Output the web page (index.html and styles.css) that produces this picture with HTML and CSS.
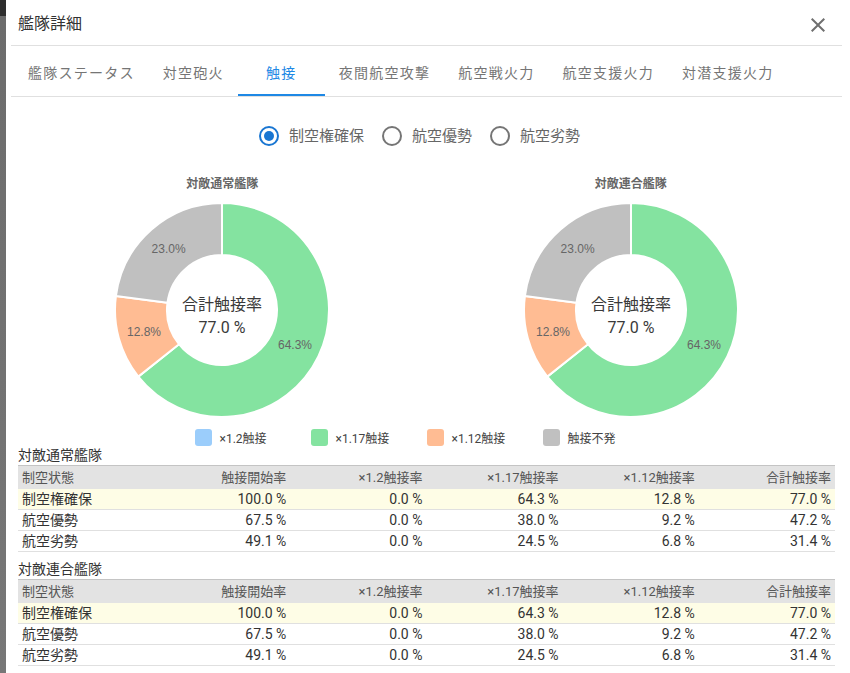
FILE: index.html
```html
<!DOCTYPE html>
<html lang="ja">
<head>
<meta charset="utf-8">
<title>艦隊詳細</title>
<link rel="stylesheet" href="styles.css">
</head>
<body>
<div class="backdrop"></div>
<div class="dialog">
  <header class="dlg-head">
    <div class="dlg-title">艦隊詳細</div>
    <button class="close-btn" aria-label="close">
      <svg viewBox="0 0 24 24" width="24" height="24"><path d="M19 6.41L17.59 5 12 10.59 6.41 5 5 6.41 10.59 12 5 17.59 6.41 19 12 13.41 17.59 19 19 17.59 13.41 12z" fill="#6f6f6f"/></svg>
    </button>
  </header>
  <nav class="tabs">
    <div class="tab">艦隊ステータス</div>
    <div class="tab">対空砲火</div>
    <div class="tab active">触接</div>
    <div class="tab">夜間航空攻撃</div>
    <div class="tab">航空戦火力</div>
    <div class="tab">航空支援火力</div>
    <div class="tab">対潜支援火力</div>
  </nav>
  <main class="content">
    <div class="radios">
      <label class="radio on"><span class="radio-ico"><svg viewBox="0 0 24 24" width="24" height="24"><circle cx="12" cy="12" r="9" fill="none" stroke="#1976d2" stroke-width="2"/><circle cx="12" cy="12" r="5" fill="#1976d2"/></svg></span><span class="radio-label">制空権確保</span></label>
      <label class="radio"><span class="radio-ico"><svg viewBox="0 0 24 24" width="24" height="24"><circle cx="12" cy="12" r="9" fill="none" stroke="#757575" stroke-width="2"/></svg></span><span class="radio-label">航空優勢</span></label>
      <label class="radio"><span class="radio-ico"><svg viewBox="0 0 24 24" width="24" height="24"><circle cx="12" cy="12" r="9" fill="none" stroke="#757575" stroke-width="2"/></svg></span><span class="radio-label">航空劣勢</span></label>
    </div>

    <div class="charts">
      <section class="chart">
        <div class="chart-title">対敵通常艦隊</div>
        <svg class="donut" viewBox="0 0 216 216" width="216" height="216">
          <path class="seg green" d="M108,1 A107,107 0 1,1 24.28,174.64 L64.97,142.25 A55,55 0 1,0 108,53 Z"/>
          <path class="seg orange" d="M24.28,174.64 A107,107 0 0,1 1.93,93.92 L53.48,100.76 A55,55 0 0,0 64.97,142.25 Z"/>
          <path class="seg grey" d="M1.93,93.92 A107,107 0 0,1 108,1 L108,53 A55,55 0 0,0 53.48,100.76 Z"/>
          <text class="seg-label" x="181" y="143">64.3%</text>
          <text class="seg-label" x="30" y="129.6">12.8%</text>
          <text class="seg-label" x="54.6" y="47.1">23.0%</text>
          <text class="center-label" x="108" y="102">合計触接率</text>
          <text class="center-label" x="108" y="125.5">77.0 %</text>
        </svg>
      </section>
      <section class="chart">
        <div class="chart-title">対敵連合艦隊</div>
        <svg class="donut" viewBox="0 0 216 216" width="216" height="216">
          <path class="seg green" d="M108,1 A107,107 0 1,1 24.28,174.64 L64.97,142.25 A55,55 0 1,0 108,53 Z"/>
          <path class="seg orange" d="M24.28,174.64 A107,107 0 0,1 1.93,93.92 L53.48,100.76 A55,55 0 0,0 64.97,142.25 Z"/>
          <path class="seg grey" d="M1.93,93.92 A107,107 0 0,1 108,1 L108,53 A55,55 0 0,0 53.48,100.76 Z"/>
          <text class="seg-label" x="181" y="143">64.3%</text>
          <text class="seg-label" x="30" y="129.6">12.8%</text>
          <text class="seg-label" x="54.6" y="47.1">23.0%</text>
          <text class="center-label" x="108" y="102">合計触接率</text>
          <text class="center-label" x="108" y="125.5">77.0 %</text>
        </svg>
      </section>
    </div>

    <div class="legend">
      <div class="legend-item"><span class="swatch sw-blue"></span>×1.2触接</div>
      <div class="legend-item"><span class="swatch sw-green"></span>×1.17触接</div>
      <div class="legend-item"><span class="swatch sw-orange"></span>×1.12触接</div>
      <div class="legend-item"><span class="swatch sw-grey"></span>触接不発</div>
    </div>

    <div class="caption">対敵通常艦隊</div>
    <table class="rate-table">
      <thead>
        <tr><th class="left">制空状態</th><th>触接開始率</th><th>×1.2触接率</th><th>×1.17触接率</th><th>×1.12触接率</th><th>合計触接率</th></tr>
      </thead>
      <tbody>
        <tr class="hl"><td class="left">制空権確保</td><td>100.0 %</td><td>0.0 %</td><td>64.3 %</td><td>12.8 %</td><td>77.0 %</td></tr>
        <tr><td class="left">航空優勢</td><td>67.5 %</td><td>0.0 %</td><td>38.0 %</td><td>9.2 %</td><td>47.2 %</td></tr>
        <tr><td class="left">航空劣勢</td><td>49.1 %</td><td>0.0 %</td><td>24.5 %</td><td>6.8 %</td><td>31.4 %</td></tr>
      </tbody>
    </table>

    <div class="caption second">対敵連合艦隊</div>
    <table class="rate-table">
      <thead>
        <tr><th class="left">制空状態</th><th>触接開始率</th><th>×1.2触接率</th><th>×1.17触接率</th><th>×1.12触接率</th><th>合計触接率</th></tr>
      </thead>
      <tbody>
        <tr class="hl"><td class="left">制空権確保</td><td>100.0 %</td><td>0.0 %</td><td>64.3 %</td><td>12.8 %</td><td>77.0 %</td></tr>
        <tr><td class="left">航空優勢</td><td>67.5 %</td><td>0.0 %</td><td>38.0 %</td><td>9.2 %</td><td>47.2 %</td></tr>
        <tr><td class="left">航空劣勢</td><td>49.1 %</td><td>0.0 %</td><td>24.5 %</td><td>6.8 %</td><td>31.4 %</td></tr>
      </tbody>
    </table>
  </main>
</div>
</body>
</html>
```

FILE: styles.css
```css
* { box-sizing: border-box; }
html, body { margin: 0; padding: 0; height: 100%; overflow: hidden; }
body {
  font-family: Roboto, "Noto Sans CJK JP", sans-serif;
  color: #333;
  background: linear-gradient(#2e2e2e 0, #2e2e2e 16px, #6c6c6c 16px, #777 100%);
  display: flex;
}
.backdrop { width: 6px; flex: none; }
.dialog {
  flex: 1;
  background: #fff;
  padding: 0 8px 0 5px;
  height: 673px;
}
.dlg-head {
  height: 46px;
  display: flex;
  align-items: center;
  justify-content: space-between;
  border-bottom: 1px solid #e0e0e0;
  padding: 0 12px 0 7px;
}
.dlg-title { font-size: 16px; color: #333; line-height: 24px; margin-top: 3px; }
.close-btn {
  border: 0; background: none; padding: 0; width: 24px; height: 24px;
  display: flex; margin-top: 4px;
}
.tabs {
  display: flex;
  height: 51px;
  padding-top: 2px;
  padding-left: 3px;
  border-bottom: 1px solid #e0e0e0;
}
.tab {
  min-width: 87px;
  padding: 2px 14px 0;
  font-size: 14px;
  letter-spacing: 1.25px;
  color: #757575;
  display: flex;
  align-items: center;
  justify-content: center;
  white-space: nowrap;
  border-bottom: 2px solid transparent;
}
.tab.active { color: #1e88e5; border-bottom-color: #1e88e5; }

.content { padding: 0 7px; }
.radios {
  display: flex;
  justify-content: center;
  margin-top: 27px;
  height: 24px;
}
.radio { display: flex; align-items: center; margin-right: 16px; }
.radio-ico { width: 24px; height: 24px; margin-right: 8px; display: flex; }
.radio-label { font-size: 15px; color: #666; line-height: 24px; }

.charts {
  display: grid;
  grid-template-columns: 1fr 1fr;
  margin-top: 28px;
}
.chart { display: flex; flex-direction: column; align-items: center; }
.chart-title {
  font-family: "Liberation Sans", "Noto Sans CJK JP", sans-serif;
  font-size: 12px; font-weight: bold; color: #666;
  line-height: 16px; height: 16px;
}
.donut { display: block; margin-top: 10px; }
.seg { stroke: #fff; stroke-width: 2; stroke-linejoin: round; }
.green { fill: #84e3a0; }
.orange { fill: #ffbc93; }
.grey { fill: #c0c0c0; }
.seg-label {
  font-family: "Liberation Sans", Arial, sans-serif;
  font-size: 12px; fill: #666;
  text-anchor: middle; dominant-baseline: central;
}
.center-label {
  font-family: Roboto, "Noto Sans CJK JP", sans-serif;
  font-size: 16px; fill: #3a3a3a;
  text-anchor: middle; dominant-baseline: central;
}

.legend {
  display: flex;
  justify-content: center;
  margin-top: 10px;
  height: 18px;
}
.legend-item {
  width: 116px;
  display: flex;
  align-items: center;
  font-size: 12px;
  color: #444;
}
.swatch { width: 17px; height: 17px; border-radius: 3px; margin-right: 8px; flex: none; }
.sw-blue { background: #9bcdfb; }
.sw-green { background: #84e3a0; }
.sw-orange { background: #ffbc93; }
.sw-grey { background: #c0c0c0; }

.caption { font-size: 14px; color: #333; line-height: 19px; height: 19px; }
.caption.second { margin-top: 8px; }

.rate-table {
  width: 100%;
  border-collapse: separate;
  border-spacing: 0;
  table-layout: fixed;
}
.rate-table th {
  background: #e3e3e3;
  border-top: 1px solid #c4c4c4;
  font-weight: normal;
  font-size: 13px;
  color: #555;
  line-height: 23px;
  padding: 0 4px;
  text-align: right;
}
.rate-table td {
  font-size: 14px;
  color: #333;
  line-height: 20px;
  padding: 0 4px;
  text-align: right;
  border-bottom: 1px solid #e0e0e0;
}
.rate-table .left { text-align: left; }
.rate-table tr.hl td { background: #fefde6; }
```
